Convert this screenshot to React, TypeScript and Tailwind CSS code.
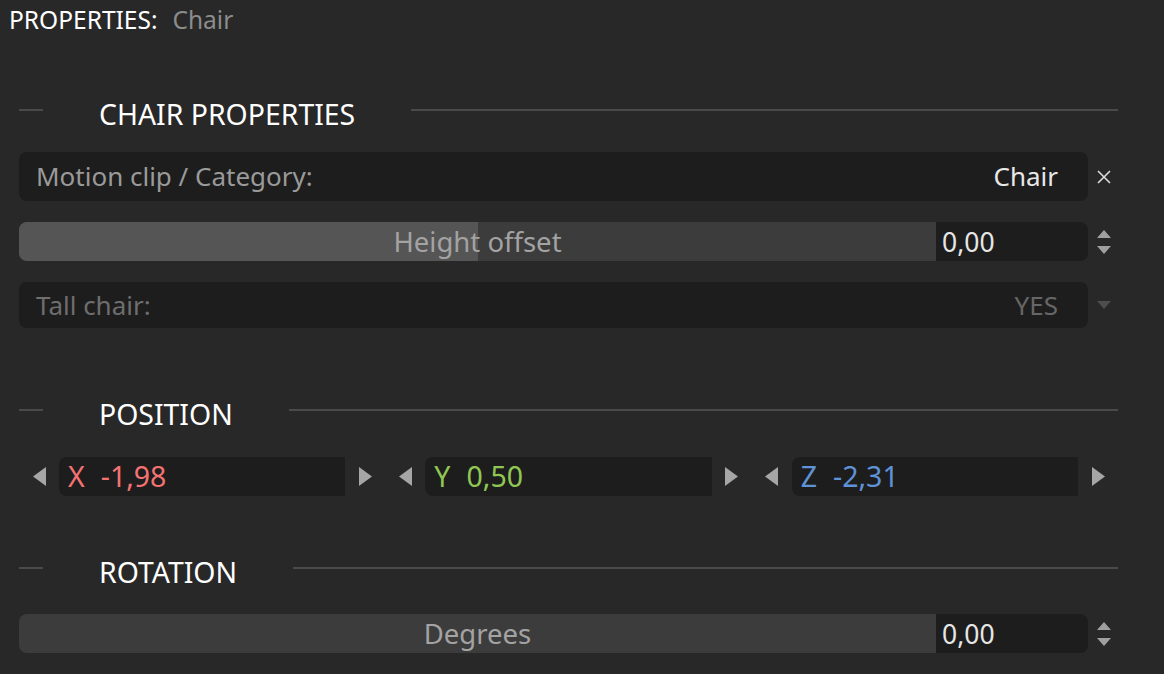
import React from "react";

const font = { fontFamily: '"Noto Sans", "Open Sans", sans-serif' };

function SectionHeader({ title }: { title: string }) {
  return (
    <div className="flex items-center h-[30px]">
      <div className="w-[24px] h-[2px] bg-[#4a4a4a] mb-[8px]" />
      <div className="ml-[56px] text-[28.4px] leading-[30px] text-white whitespace-nowrap">{title}</div>
      <div className="flex-1 ml-[56px] h-[2px] bg-[#4a4a4a] mb-[8px]" />
    </div>
  );
}

function TriUp({ color = "#a0a0a0" }: { color?: string }) {
  return (
    <svg width="16" height="9" viewBox="0 0 16 9">
      <path d="M1 9 L8 1 L15 9 Z" fill={color} />
    </svg>
  );
}

function TriDown({ color = "#a0a0a0" }: { color?: string }) {
  return (
    <svg width="16" height="9" viewBox="0 0 16 9">
      <path d="M1 0 L15 0 L8 8 Z" fill={color} />
    </svg>
  );
}

function TriLeft() {
  return (
    <svg width="13" height="19" viewBox="0 0 13 19">
      <path d="M13 0 L13 19 L0 9.5 Z" fill="#a6a6a6" />
    </svg>
  );
}

function TriRight() {
  return (
    <svg width="13" height="19" viewBox="0 0 13 19">
      <path d="M0 0 L0 19 L13 9.5 Z" fill="#a6a6a6" />
    </svg>
  );
}

function Spinner() {
  return (
    <div className="w-[30px] flex flex-col items-center justify-center gap-[8px] pl-[2px]">
      <TriUp />
      <TriDown />
    </div>
  );
}

function SliderRow({ label, fill, value }: { label: string; fill: number; value: string }) {
  return (
    <div className="flex h-[39px]">
      <div className="flex flex-1">
        <div className="relative flex-1 rounded-l-lg bg-[#3c3c3c] overflow-hidden">
          <div className="absolute inset-y-0 left-0 bg-[#555555]" style={{ width: `${fill}%` }} />
          <div className="absolute inset-0 flex items-center justify-center text-[27.5px] text-[#a3a3a3]">
            {label}
          </div>
        </div>
        <div className="w-[152px] rounded-r-lg bg-[#1d1d1d] flex items-center pl-[6px] pt-[3px] text-[26.5px] text-[#e6e6e6]">
          {value}
        </div>
      </div>
      <Spinner />
    </div>
  );
}

function AxisField({ axis, value, color }: { axis: string; value: string; color: string }) {
  return (
    <div className="flex h-[39px]">
      <div className="w-10 flex items-center justify-center">
        <TriLeft />
      </div>
      <div className={`flex-1 rounded-l-lg bg-[#1d1d1d] flex items-center pl-[9px] text-[28.5px] ${color}`}>
        <span>{axis}</span>
        <span className="ml-[16px]">{value}</span>
      </div>
      <div className="w-10 flex items-center justify-center">
        <TriRight />
      </div>
    </div>
  );
}

export default function App() {
  return (
    <div className="w-[1164px] h-[674px] bg-[#282828] overflow-hidden" style={font}>
      <div className="flex items-center h-[40px] pl-[9px] text-[24.5px]">
        <span className="text-white">PROPERTIES:</span>
        <span className="ml-[15px] text-[#8c8c8c]">Chair</span>
      </div>

      <div className="pl-[19px] pr-[46px]">
        <div className="mt-[59px]">
          <SectionHeader title="CHAIR PROPERTIES" />
        </div>

        <div className="mt-[23px] flex h-[49px]">
          <div className="flex-1 rounded-lg bg-[#1d1d1d] flex items-center justify-between pl-[17px] pr-[30px] text-[26px]">
            <span className="text-[#9a9a9a]">Motion clip / Category:</span>
            <span className="text-[#e8e8e8]">Chair</span>
          </div>
          <div className="w-[30px] flex items-center justify-center pl-[2px]">
            <svg width="14" height="14" viewBox="0 0 14 14">
              <path d="M1 1 L13 13 M13 1 L1 13" stroke="#dcdcdc" strokeWidth="1.6" />
            </svg>
          </div>
        </div>

        <div className="mt-[21px]">
          <SliderRow label="Height offset" fill={50} value="0,00" />
        </div>

        <div className="mt-[21px] flex h-[46px]">
          <div className="flex-1 rounded-lg bg-[#1d1d1d] flex items-center justify-between pl-[17px] pr-[30px] text-[26px]">
            <span className="text-[#6e6e6e]">Tall chair:</span>
            <span className="text-[#666666]">YES</span>
          </div>
          <div className="w-[30px] flex items-center justify-center pl-[2px]">
            <TriDown color="#4e4e4e" />
          </div>
        </div>

        <div className="mt-[71px]">
          <SectionHeader title="POSITION" />
        </div>

        <div className="mt-[28px] grid grid-cols-3">
          <AxisField axis="X" value="-1,98" color="text-[#f47272]" />
          <AxisField axis="Y" value="0,50" color="text-[#8fc752]" />
          <AxisField axis="Z" value="-2,31" color="text-[#5f92d6]" />
        </div>

        <div className="mt-[61px]">
          <SectionHeader title="ROTATION" />
        </div>

        <div className="mt-[27px]">
          <SliderRow label="Degrees" fill={0} value="0,00" />
        </div>
      </div>
    </div>
  );
}
